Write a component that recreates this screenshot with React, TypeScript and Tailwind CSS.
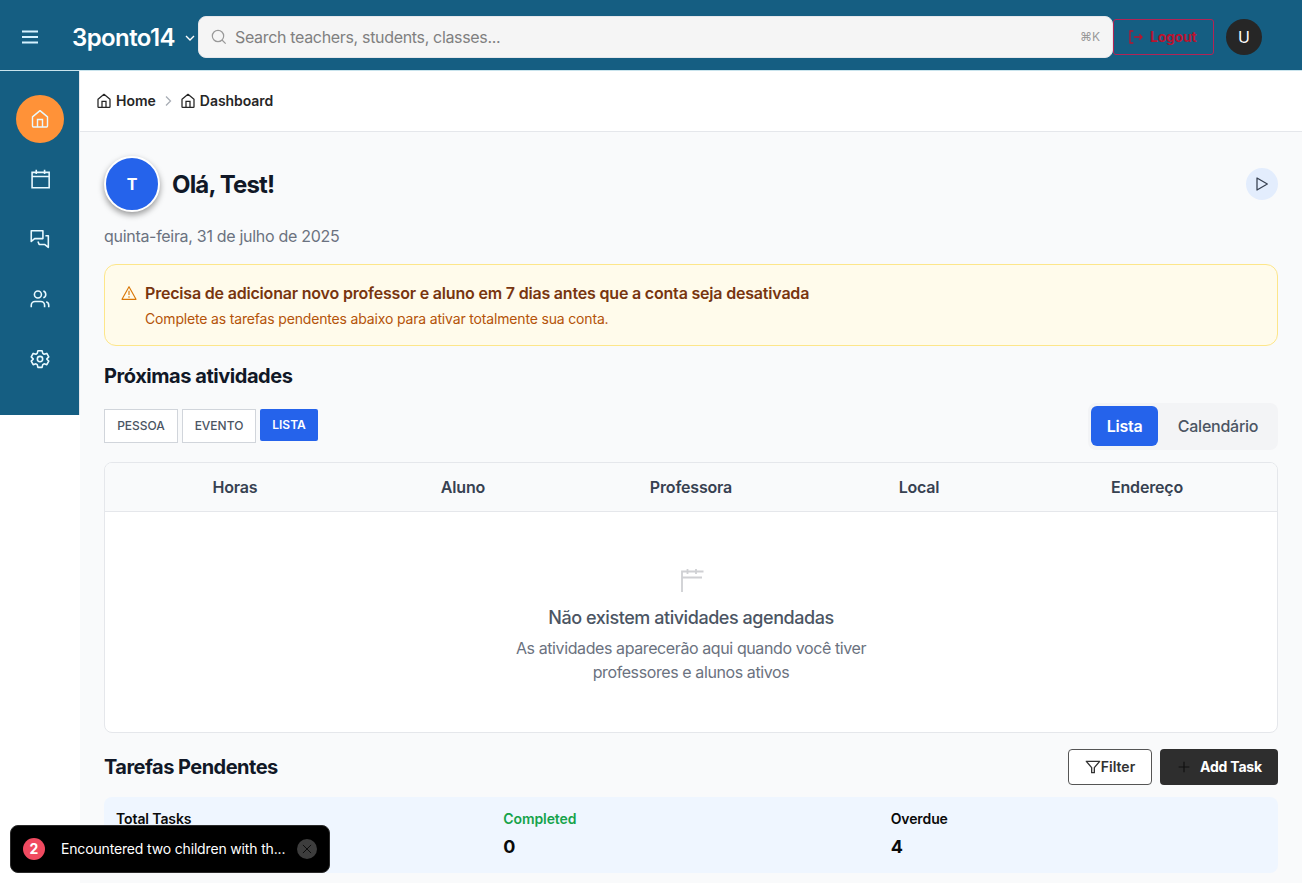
import type { ReactNode } from "react";

type IconProps = { size?: number; className?: string; weight?: number; children: ReactNode };

function Icon({ size = 24, className = "", weight = 1.5, children }: IconProps) {
  return (
    <svg
      width={size}
      height={size}
      viewBox="0 0 24 24"
      fill="none"
      stroke="currentColor"
      strokeWidth={weight}
      className={"shrink-0 " + className}
    >
      {children}
    </svg>
  );
}

const homePaths = (
  <>
    <path d="M3 9.5 12 2l9 7.5V20.5a1 1 0 0 1-1 1H4a1 1 0 0 1-1-1Z" strokeLinejoin="round" />
    <path d="M9 21.5V12.5h6v9" />
  </>
);

const navItems = [
  {
    label: "Agenda",
    icon: <path d="M2.500 4h20.500v18.500H2.500zM2.500 9h20.500M7.500 1v5M17.500 1v5" />,
  },
  {
    label: "Mensagens",
    icon: (
      <>
        <path d="M1.500 2h14v9.500H5.500l-4 3.500Z" strokeLinejoin="round" />
        <path d="M18.500 8H22v14l-4.500-3.500H11l-1.500-3.500" strokeLinejoin="round" />
      </>
    ),
  },
  {
    label: "Pessoas",
    icon: (
      <>
        <circle cx="9.5" cy="6.500" r="4.200" />
        <path d="M1.500 22v-2.500a4.500 4.500 0 0 1 4.500-4.500h7a4.500 4.500 0 0 1 4.500 4.500V22M16 2.500a4.200 4.200 0 0 1 0 8M22.500 22v-2.500a4.500 4.500 0 0 0-3-4.200" />
      </>
    ),
  },
  {
    label: "Definições",
    icon: (
      <>
        <path
          d="M9.500 2h5l.8 3.300 1.600 1 3.300-1 2.300 4.200-2.300 2.300v.5l2.300 2.300-2.300 4.200-3.300-1-1.600 1-.8 3.200h-5l-.8-3.200-1.600-1-3.300 1-2.300-4.200 2.300-2.300v-.5L1.500 9.500l2.300-4.200 3.300 1 1.600-1Z"
          strokeLinejoin="round"
        />
        <circle cx="12" cy="12" r="3.200" />
      </>
    ),
  },
];

function Header() {
  return (
    <header className="flex h-[71px] items-center border-b border-[#c9e4ed] bg-[#155e82] pr-10 pb-px">
      <button className="mt-1 ml-[18px] flex size-6 items-center justify-center text-[#d5f2ff]">
        <Icon size={24} weight={1.8}>
          <path d="M4 6.500h16M4 12h16M4 17.500h16" />
        </Icon>
      </button>
      <div className="mt-1 ml-[30px] flex w-[126px] items-center text-white">
        <span className="relative top-px text-[24px] leading-8 font-semibold tracking-[-0.6px]">3ponto14</span>
        <Icon size={16} weight={2} className="mt-0.5 ml-[7px]">
          <path d="m6 9 6 6 6-6" />
        </Icon>
      </div>
      <div className="mt-1 flex h-[42px] w-[915px] items-center rounded-lg border border-[#e5e7eb] bg-[#f5f5f5] px-3">
        <Icon size={16} weight={1.8} className="text-[#999999]">
          <circle cx="10.500" cy="10.500" r="8.500" />
          <path d="m16.500 16.500 5.500 5.500" />
        </Icon>
        <span className="ml-2 flex-1 text-base tracking-[-0.33px] text-[#808080]">Search teachers, students, classes...</span>
        <span className="text-xs text-[#999999]">⌘K</span>
      </div>
      <button className="mt-1 flex h-9 w-[101px] items-center rounded-[3px] border border-[#b32456] pl-[14px] text-sm font-bold tracking-[-0.25px] text-[#b8142f]">
        <Icon size={16} weight={2} className="mr-1.5">
          <path d="M8 3H3v18h5M9 12h12M17 8l4 4-4 4" />
        </Icon>
        Logout
      </button>
      <div className="mt-1 ml-3 flex size-9 items-center justify-center rounded-full bg-[#262626] text-base text-white">U</div>
    </header>
  );
}

function Sidebar() {
  return (
    <aside className="flex h-[344px] w-20 shrink-0 flex-col items-center gap-3 border-r border-[#e5e7eb] bg-[#155e82] pt-6 pl-px text-[#e8f9ff]">
      <a className="flex size-12 items-center justify-center rounded-full bg-[#ff9238]">
        <Icon size={20} weight={1.700}>{homePaths}</Icon>
      </a>
      {navItems.map((item) => (
        <a key={item.label} className="flex size-12 items-center justify-center">
          <Icon size={20} weight={1.900}>{item.icon}</Icon>
        </a>
      ))}
    </aside>
  );
}

function Breadcrumb() {
  return (
    <nav className="flex h-[61px] items-center border-b border-[#e5e7eb] bg-white pl-4 text-sm font-semibold text-[#262626]">
      <Icon size={16} weight={1.900} className="mr-1">{homePaths}</Icon>
      <span>Home</span>
      <Icon size={12} weight={2.600} className="mx-1.5 text-[#a8adb5]">
        <path d="m8 3 9 9-9 9" />
      </Icon>
      <Icon size={16} weight={1.900} className="mr-1">{homePaths}</Icon>
      <span className="tracking-[-0.05px]">Dashboard</span>
    </nav>
  );
}

function ActivityTable() {
  return (
    <section className="mt-3 h-[271px] overflow-hidden rounded-lg border border-[#e5e7eb] bg-white">
      <div className="grid h-[49px] grid-cols-5 items-center border-b border-[#e5e7eb] bg-[#f9fafb] px-4 text-center text-base font-semibold tracking-[-0.18px] text-[#374151]">
        {["Horas", "Aluno", "Professora", "Local", "Endereço"].map((name) => (
          <span key={name}>{name}</span>
        ))}
      </div>
      <div className="flex flex-col items-center pt-14 text-center">
        <svg width="24" height="24" viewBox="0 0 24 24" fill="none" stroke="#cfd0d3" strokeWidth="1.8" className="ml-px">
          <path d="M2 24V3.500h21.500M2 9.500h20M7.500 1v5M16 1v5" />
        </svg>
        <h3 className="mt-3 text-lg leading-7 font-medium tracking-[-0.45px] text-[#4b5563]">Não existem atividades agendadas</h3>
        <p className="mt-1 w-[384px] text-base tracking-[-0.4px] text-[#6b7280]">
          As atividades aparecerão aqui quando você tiver <br />
          professores e alunos ativos
        </p>
      </div>
    </section>
  );
}

function Tasks() {
  const stats = [
    { label: "Total Tasks", color: "text-[#0a0a0a]" },
    { label: "Completed", value: "0", color: "text-[#16a34a]" },
    { label: "Overdue", value: "4", color: "text-[#0a0a0a]" },
  ];
  return (
    <section className="mt-4">
      <div className="flex h-9 items-center gap-2">
        <h2 className="flex-1 text-xl font-bold tracking-[-0.52px] text-[#111827]">Tarefas Pendentes</h2>
        <button className="flex h-9 w-[84px] items-center justify-center rounded border border-[#555555] bg-white text-sm font-semibold text-[#333333]">
          <Icon size={16} weight={2}>
            <path d="M2 3.500h20l-8 9.500v7.500h-4V13Z" strokeLinejoin="round" />
          </Icon>
          Filter
        </button>
        <button className="flex h-9 w-[118px] items-center rounded bg-[#2e2e2e] pl-4 text-sm font-bold tracking-[-0.2px] text-white">
          <Icon size={16} weight={1.800} className="mr-2 text-[#111111]">
            <path d="M12 4v16M4 12h16" />
          </Icon>
          Add Task
        </button>
      </div>
      <div className="mt-3 grid h-[76px] grid-cols-3 gap-3 rounded-lg bg-[#eff6ff] px-3 pt-3">
        {stats.map((stat) => (
          <div key={stat.label}>
            <div className={"text-sm leading-5 font-semibold tracking-[-0.1px] " + stat.color}>{stat.label}</div>
            <div className="mt-1 text-lg leading-7 font-bold text-[#0a0a0a]">{stat.value}</div>
          </div>
        ))}
      </div>
    </section>
  );
}

export default function App() {
  return (
    <div className="h-[883px] w-[1302px] overflow-hidden bg-white font-['Inter',sans-serif] text-base">
      <Header />
      <div className="flex items-start">
        <Sidebar />
        <main className="h-[812px] min-w-0 flex-1 bg-[#f9fafb]">
          <Breadcrumb />
          <div className="px-6 pt-6">
            <div className="flex h-14 items-center">
              <div className="flex size-14 items-center justify-center rounded-full border-2 border-white bg-[#2563eb] text-base font-bold text-white shadow-[0_3px_6px_rgba(0,0,0,0.4)]">T</div>
              <h1 className="mt-0.5 ml-3 flex-1 text-2xl font-bold tracking-[-0.85px] text-[#111827]">Olá, Test!</h1>
              <button className="flex size-8 items-center justify-center rounded-full bg-[#e3edfd] text-[#374151]">
                <Icon size={16} weight={1.900}>
                  <path d="M4.500 3v18L20 12Z" strokeLinejoin="round" />
                </Icon>
              </button>
            </div>
            <p className="mt-3 text-base tracking-[-0.3px] text-[#6b7280]">quinta-feira, 31 de julho de 2025</p>
            <section className="mt-4 flex h-[82px] rounded-xl border border-[#fde68a] bg-[#fffbeb] px-4 pt-4">
              <Icon size={16} weight={1.700} className="mt-1 text-[#d97706]">
                <path d="M12 2.500 1.500 21.500h21Z" strokeLinejoin="round" />
                <path d="M12 8.500v6.500M12 17v2" />
              </Icon>
              <div className="ml-2">
                <h2 className="text-base font-semibold tracking-[-0.19px] text-[#78350f]">
                  Precisa de adicionar novo professor e aluno em 7 dias antes que a conta seja desativada
                </h2>
                <p className="mt-1 text-sm tracking-[-0.165px] text-[#b45309]">Complete as tarefas pendentes abaixo para ativar totalmente sua conta.</p>
              </div>
            </section>
            <h2 className="mt-4 text-xl leading-7 font-bold tracking-[-0.45px] text-[#111827]">Próximas atividades</h2>
            <div className="mt-[13px] flex h-[47px] items-start justify-between">
              <div className="mt-1.5 flex items-start gap-1 text-xs font-medium">
                <button className="h-[34px] w-[74px] border border-[#d1d5db] bg-white text-[#4b5563]">PESSOA</button>
                <button className="h-[34px] w-[74px] border border-[#d1d5db] bg-white text-[#4b5563]">EVENTO</button>
                <button className="h-8 w-[58px] rounded-[2px] bg-[#2563eb] font-semibold text-white">LISTA</button>
              </div>
              <div className="flex h-[47px] w-[190px] items-start rounded-lg bg-[#f3f4f6] pt-[3px] pl-[3px] text-base font-medium tracking-[-0.25px]">
                <button className="h-10 w-[67px] rounded-md bg-[#2563eb] font-semibold text-white">Lista</button>
                <button className="h-10 w-[120px] text-[#4b5563]">Calendário</button>
              </div>
            </div>
            <ActivityTable />
            <Tasks />
          </div>
        </main>
      </div>
      <div className="fixed bottom-2.5 left-2.5 flex h-12 w-80 items-center rounded-lg border border-[#2a2a2a] bg-black pl-3 text-sm text-white">
        <span className="flex size-[22px] items-center justify-center rounded-full bg-[#f04a60] font-bold">2</span>
        <span className="ml-4 w-[236px] tracking-[-0.16px] whitespace-nowrap">Encountered two children with th...</span>
        <span className="flex size-5 items-center justify-center rounded-full bg-[#3d3d3d] text-[#0a0a0a]">
          <Icon size={14} weight={1.600}>
            <path d="m5 5 14 14M19 5 5 19" />
          </Icon>
        </span>
      </div>
    </div>
  );
}
